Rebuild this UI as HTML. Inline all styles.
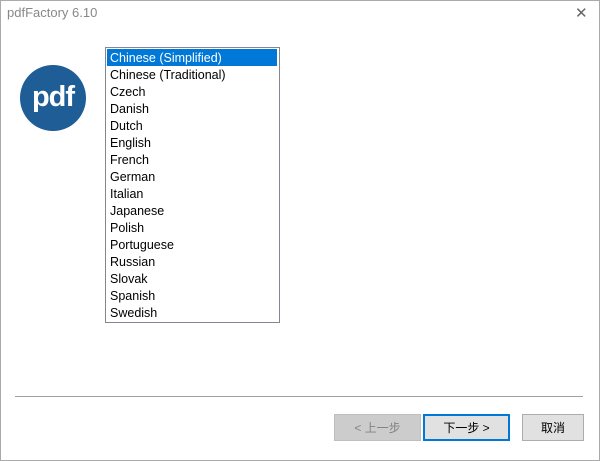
<!DOCTYPE html>
<html><head><style>
body{margin:0;width:600px;height:461px;background:#fff;font-family:"Liberation Sans","Noto Sans CJK SC",sans-serif;position:relative;overflow:hidden}
.win{position:absolute;left:0;top:0;width:598px;height:459px;border:1px solid #aaa}
.title{position:absolute;left:7px;top:5px;font-size:13px;color:#888}
.x{position:absolute;left:575px;top:4px;font-size:15px;color:#666}
.logo{position:absolute;left:20px;top:65px;width:66px;height:66px;border-radius:50%;background:#1e5d96;color:#fff;font-weight:bold;font-size:29px;text-align:center;line-height:64px;letter-spacing:-1px}
.list{position:absolute;left:105px;top:47px;width:173px;height:274px;border:1px solid #828790}
.it{position:absolute;left:1px;width:170px;height:17px;font-size:12.5px;line-height:19px;padding-left:3px;box-sizing:border-box;color:#000}
.sel{background:#0078d7;color:#fff}
.sep{position:absolute;left:15px;top:396px;width:568px;height:1px;background:#a0a0a0}
.btn{position:absolute;top:414px;height:27px;box-sizing:border-box;border:1px solid #adadad;background:#e1e1e1;font-size:12px;text-align:center;line-height:26px}
</style></head><body>
<div class="win"></div>
<div class="title">pdfFactory 6.10</div>
<div class="x">✕</div>
<div class="logo">pdf</div>
<div class="list">
<div class="it sel" style="top:1px">Chinese (Simplified)</div>
<div class="it" style="top:18px">Chinese (Traditional)</div>
<div class="it" style="top:35px">Czech</div>
<div class="it" style="top:52px">Danish</div>
<div class="it" style="top:69px">Dutch</div>
<div class="it" style="top:86px">English</div>
<div class="it" style="top:103px">French</div>
<div class="it" style="top:120px">German</div>
<div class="it" style="top:137px">Italian</div>
<div class="it" style="top:154px">Japanese</div>
<div class="it" style="top:171px">Polish</div>
<div class="it" style="top:188px">Portuguese</div>
<div class="it" style="top:205px">Russian</div>
<div class="it" style="top:222px">Slovak</div>
<div class="it" style="top:239px">Spanish</div>
<div class="it" style="top:256px">Swedish</div>
</div>
<div class="sep"></div>
<div class="btn" style="left:334px;width:87px;background:#ccc;border-color:#bfbfbf;color:#838383">&lt; 上一步</div>
<div class="btn" style="left:423px;width:87px;border:2px solid #0078d7;line-height:24px">下一步 &gt;</div>
<div class="btn" style="left:522px;width:62px">取消</div>
</body></html>
